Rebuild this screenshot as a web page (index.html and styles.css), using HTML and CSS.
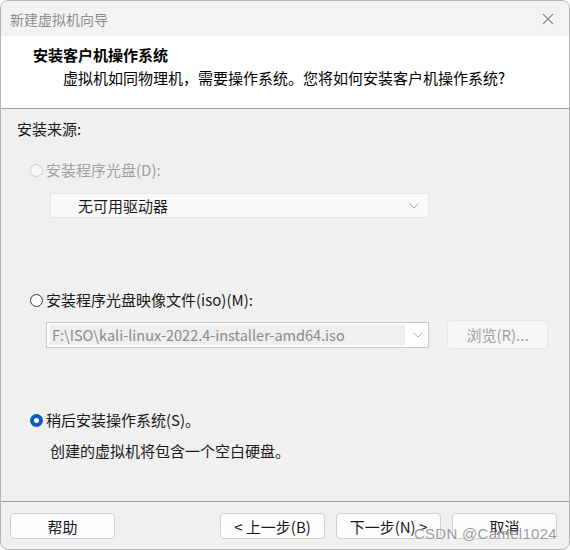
FILE: index.html
```html
<!DOCTYPE html>
<html>
<head>
<meta charset="utf-8">
<link rel="stylesheet" href="styles.css">
</head>
<body>
<div class="window">
  <div class="titlebar">
    <span class="title">新建虚拟机向导</span>
    <svg class="close" width="12" height="12" viewBox="0 0 12 12"><path d="M1 1L11 11M11 1L1 11" stroke="#8a8a8a" stroke-width="1.1" fill="none"/></svg>
  </div>
  <div class="header">
    <div class="h-title">安装客户机操作系统</div>
    <div class="h-sub">虚拟机如同物理机，需要操作系统。您将如何安装客户机操作系统?</div>
  </div>
  <div class="content">
    <div class="source-label">安装来源:</div>
    <div class="radio-row row1 disabled"><span class="radio dis"></span>安装程序光盘(D):</div>
    <div class="select">
      <span class="select-text">无可用驱动器</span>
      <svg class="chev" width="10" height="6" viewBox="0 0 10 6"><path d="M0.5 0.5L5 5L9.5 0.5" stroke="#a8a8a8" fill="none"/></svg>
    </div>
    <div class="radio-row row2"><span class="radio"></span>安装程序光盘映像文件(iso)(M):</div>
    <div class="combo-row">
      <div class="combo">
        <span class="combo-text">F:\ISO\kali-linux-2022.4-installer-amd64.iso</span>
        <svg class="chev2" width="10" height="6" viewBox="0 0 10 6"><path d="M0.5 0.5L5 5L9.5 0.5" stroke="#b0b0b0" fill="none"/></svg>
      </div>
      <div class="browse">浏览(R)...</div>
    </div>
    <div class="radio-row row3"><span class="radio checked"></span>稍后安装操作系统(S)。</div>
    <div class="note">创建的虚拟机将包含一个空白硬盘。</div>
  </div>
  <div class="footer">
    <div class="btn">帮助</div>
    <div class="spacer"></div>
    <div class="btn">&lt; 上一步(B)</div>
    <div class="btn">下一步(N) &gt;</div>
    <div class="btn">取消</div>
  </div>
  <div class="watermark">CSDN @Camel1024</div>
</div>
</body>
</html>
```
FILE: styles.css
```css
* { box-sizing: border-box; }
html, body { margin: 0; padding: 0; background: #ffffff; }
body {
  font-family: "Noto Sans CJK SC", "Noto Sans", sans-serif;
  font-size: 15px;
  color: #1a1a1a;
}
.window {
  position: relative;
  width: 570px;
  height: 550px;
  border: 1px solid #b4b4b4;
  border-radius: 8px;
  background: #f0f0f0;
  display: flex;
  flex-direction: column;
  overflow: hidden;
}
.titlebar {
  height: 35px;
  flex: none;
  background: #f3f3f3;
  display: flex;
  align-items: center;
  padding-left: 9px;
  padding-right: 15px;
}
.title {
  font-size: 14px;
  color: #8c8c8c;
  line-height: 20px;
}
.close { margin-left: auto; }
.header {
  flex: none;
  height: 73px;
  background: #ffffff;
  border-bottom: 1px solid #a0a0a0;
  padding-top: 8px;
}
.h-title {
  font-weight: bold;
  line-height: 22px;
  padding-left: 32px;
  color: #000;
}
.h-sub {
  line-height: 22px;
  padding-left: 62px;
  margin-top: 1px;
  color: #000;
}
.content {
  flex: 1;
  padding-left: 16px;
}
.source-label {
  line-height: 20px;
  margin-top: 10px;
}
.radio-row {
  display: flex;
  align-items: center;
  line-height: 20px;
  padding-left: 13px;
}
.radio-row.disabled { color: #a0a0a0; }
.row1 { margin-top: 21px; }
.row2 { margin-top: 72px; }
.row3 { margin-top: 61px; }
.radio {
  width: 13px;
  height: 13px;
  border-radius: 50%;
  border: 1px solid #3a3a3a;
  background: #fff;
  margin-right: 3px;
  flex: none;
}
.radio.dis {
  border-color: #cdcdcd;
  background: #f7f7f7;
}
.radio.checked {
  border: 4px solid #0a5cb8;
  background: #ffffff;
}
.select {
  margin-top: 13px;
  margin-left: 33px;
  width: 379px;
  height: 25px;
  background: #fafafa;
  border: 1px solid #e6e6e6;
  display: flex;
  align-items: center;
  padding-left: 27px;
  padding-right: 9px;
}
.select-text { color: #1a1a1a; }
.chev { margin-left: auto; }
.combo-row {
  display: flex;
  align-items: center;
  margin-top: 10px;
  margin-left: 29px;
}
.combo {
  width: 383px;
  height: 26px;
  border: 1px solid #c8c8c8;
  background: #ffffff;
  display: flex;
  align-items: center;
  padding: 2px;
}
.combo-text {
  background: #efefef;
  height: 20px;
  line-height: 20px;
  width: 356px;
  padding-left: 3px;
  color: #8a8a8a;
  font-size: 14.5px;
  white-space: nowrap;
  overflow: hidden;
}
.chev2 { margin-left: 8px; }
.browse {
  margin-left: 18px;
  width: 101px;
  height: 29px;
  border: 1px solid #e6e6e6;
  border-radius: 4px;
  background: #f6f6f6;
  color: #a0a0a0;
  display: flex;
  align-items: center;
  justify-content: center;
}
.note {
  margin-top: 11px;
  line-height: 20px;
  padding-left: 33px;
}
.footer {
  flex: none;
  height: 48px;
  border-top: 1px solid #a0a0a0;
  display: flex;
  align-items: flex-start;
  padding: 11px 12px 0 9px;
  gap: 11px;
}
.spacer { flex: 1; }
.btn {
  width: 105px;
  height: 26px;
  border: 1px solid #d0d0d0;
  border-radius: 4px;
  background: #fdfdfd;
  display: flex;
  align-items: center;
  justify-content: center;
  color: #1a1a1a;
}
.watermark {
  position: absolute;
  right: 12px;
  bottom: 7px;
  font-family: "Liberation Sans", "Noto Sans", sans-serif;
  font-size: 15px;
  color: rgba(120, 120, 120, 0.75);
  text-shadow: 0 0 2px #fff;
  letter-spacing: 0.3px;
}
```
